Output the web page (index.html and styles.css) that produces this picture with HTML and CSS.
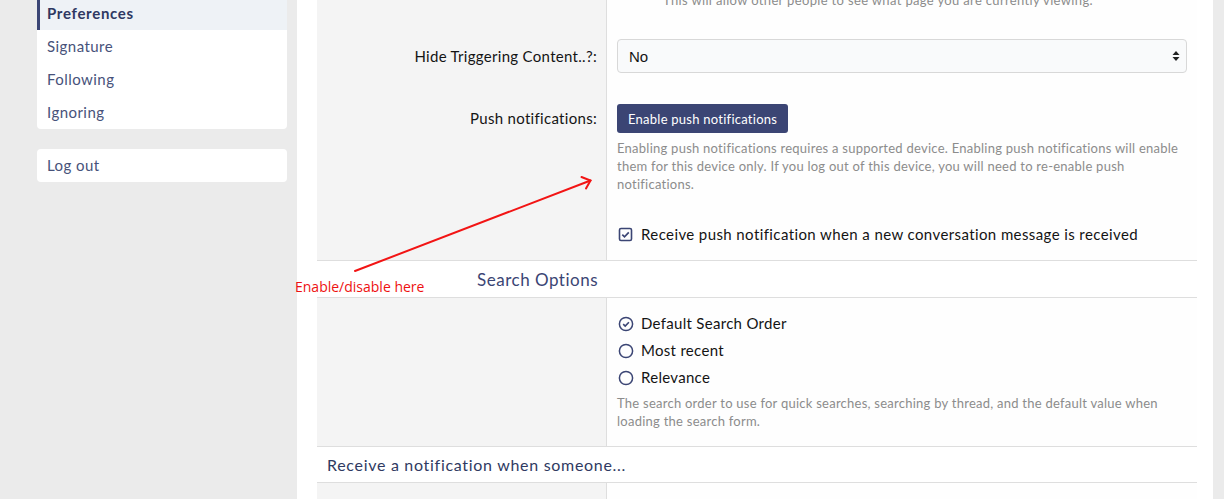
FILE: index.html
```html
<!DOCTYPE html>
<html>
<head>
<meta charset="utf-8">
<link rel="stylesheet" href="styles.css">
</head>
<body>
<div class="page">
  <aside class="sidebar">
    <nav class="block">
      <a class="nav-item active">Preferences</a>
      <a class="nav-item">Signature</a>
      <a class="nav-item">Following</a>
      <a class="nav-item">Ignoring</a>
    </nav>
    <nav class="block">
      <a class="nav-item">Log out</a>
    </nav>
  </aside>

  <main class="main">
    <div class="row row-a">
      <div class="label-cell"></div>
      <div class="input-cell">
        <p class="hint indented">This will allow other people to see what page you are currently viewing.</p>
      </div>
    </div>

    <div class="row row-b">
      <div class="label-cell"><span class="label select-label">Hide Triggering Content..?:</span></div>
      <div class="input-cell">
        <div class="select">
          <span>No</span>
          <svg class="select-arrow" width="8" height="12" viewBox="0 0 8 12"><path d="M4 1 L7.5 5 H0.5 Z M4 11 L7.5 7 H0.5 Z" fill="#222"/></svg>
        </div>
      </div>
    </div>

    <div class="row row-c">
      <div class="label-cell"><span class="label btn-label">Push notifications:</span></div>
      <div class="input-cell">
        <button class="button">Enable push notifications</button>
        <p class="hint push-hint">Enabling push notifications requires a supported device. Enabling push notifications will enable them for this device only. If you log out of this device, you will need to re-enable push notifications.</p>
      </div>
    </div>

    <div class="row row-d">
      <div class="label-cell"></div>
      <div class="input-cell">
        <label class="choice">
          <svg class="icon" width="15" height="15" viewBox="0 0 15 15"><rect x="1.5" y="1.5" width="12" height="12" rx="1.5" fill="none" stroke="#3b4574" stroke-width="1.6"/><path d="M4.3 7.6 L6.5 9.8 L10.8 5.3" fill="none" stroke="#3b4574" stroke-width="1.7"/></svg>
          <span>Receive push notification when a new conversation message is received</span>
        </label>
      </div>
    </div>

    <div class="header-row header-right">
      <div class="header-label">Search Options</div>
    </div>

    <div class="row row-e">
      <div class="label-cell"></div>
      <div class="input-cell">
        <label class="choice radio">
          <svg class="icon" width="16" height="16" viewBox="0 0 16 16"><circle cx="8" cy="8" r="6.6" fill="none" stroke="#3b4574" stroke-width="1.5"/><path d="M5.2 8.2 L7.2 10.1 L10.9 6.2" fill="none" stroke="#3b4574" stroke-width="1.6"/></svg>
          <span>Default Search Order</span>
        </label>
        <label class="choice radio">
          <svg class="icon" width="16" height="16" viewBox="0 0 16 16"><circle cx="8" cy="8" r="6.6" fill="none" stroke="#3b4574" stroke-width="1.5"/></svg>
          <span>Most recent</span>
        </label>
        <label class="choice radio">
          <svg class="icon" width="16" height="16" viewBox="0 0 16 16"><circle cx="8" cy="8" r="6.6" fill="none" stroke="#3b4574" stroke-width="1.5"/></svg>
          <span>Relevance</span>
        </label>
        <p class="hint search-hint">The search order to use for quick searches, searching by thread, and the default value when loading the search form.</p>
      </div>
    </div>

    <div class="header-row header-left">
      <div class="header-title">Receive a notification when someone...</div>
    </div>

    <div class="row row-f">
      <div class="label-cell"></div>
      <div class="input-cell"></div>
    </div>
  </main>
</div>

<div class="annotation">
  <svg class="annot-arrow" width="1224" height="499" viewBox="0 0 1224 499">
    <g stroke="#f21414" stroke-width="2" fill="none" stroke-linecap="round">
      <line x1="355" y1="271" x2="590.5" y2="180.5"/>
      <polyline points="581.5,177 590.5,180.5 586,188.5"/>
    </g>
  </svg>
  <span class="annot-text">Enable/disable here</span>
</div>
</body>
</html>
```

FILE: styles.css
```css
* { box-sizing: border-box; }

html, body {
  margin: 0;
  padding: 0;
  height: 499px;
  overflow: hidden;
}

body {
  background: #ebebeb;
  font-family: "Lato", "Open Sans", sans-serif;
  color: #141414;
  position: relative;
}

.page {
  display: flex;
  gap: 10px;
  padding-left: 37px;
  padding-right: 11px;
  height: 499px;
}

.sidebar {
  width: 250px;
  flex: none;
  display: flex;
  flex-direction: column;
  gap: 20px;
  margin-top: -3px;
}

.block {
  background: #fff;
  border-radius: 4px;
  padding: 0;
  display: flex;
  flex-direction: column;
}

.nav-item {
  display: block;
  height: 33px;
  line-height: 33px;
  padding-left: 10px;
  font-size: 15px;
  letter-spacing: 0.45px;
  color: #47527a;
  text-decoration: none;
}

.nav-item.active {
  background: #eef2f6;
  border-left: 3px solid #3b4574;
  padding-left: 7px;
  font-weight: 700;
  letter-spacing: 0.7px;
  color: #2f3862;
}

.main {
  flex: 1;
  background: #fff;
  padding: 0 16px 0 20px;
}

.row {
  display: grid;
  grid-template-columns: 290px 1fr;
}

.label-cell {
  background: #f4f4f4;
  border-right: 1px solid #dedede;
  text-align: right;
  padding-right: 9px;
}

.input-cell {
  background: #fefefe;
  padding-left: 10px;
  padding-right: 10px;
}

.label {
  display: block;
  font-size: 15px;
  letter-spacing: 0.3px;
  color: #141414;
}

.hint {
  margin: 0;
  font-size: 13px;
  line-height: 18px;
  letter-spacing: 0.25px;
  color: #8c8c8c;
}

.indented { padding-left: 46px; letter-spacing: 0.35px; }

.row-a { margin-top: -9px; }
.row-a .input-cell { padding-bottom: 20px; }

.row-b .label-cell, .row-b .input-cell { padding-top: 10px; padding-bottom: 10px; }
.select-label { line-height: 34px; }

.select {
  height: 34px;
  border: 1px solid #d8d8d8;
  border-radius: 4px;
  background: #f9fafb;
  display: flex;
  align-items: center;
  justify-content: space-between;
  padding: 0 6px 0 11px;
  font-family: "Liberation Sans", Arial, sans-serif;
  font-size: 15px;
  color: #141414;
}

.row-c .label-cell, .row-c .input-cell { padding-top: 21px; padding-bottom: 10px; }
.btn-label { line-height: 29px; }

.button {
  display: block;
  height: 29px;
  padding: 0 11px;
  border: none;
  border-radius: 3px;
  background: #3b4574;
  color: #fff;
  font-family: inherit;
  font-size: 13px;
  letter-spacing: 0.25px;
}

.push-hint { margin-top: 6px; }

.row-d .input-cell { padding-top: 21px; padding-bottom: 16px; }

.choice {
  display: flex;
  align-items: center;
  gap: 8px;
  font-size: 15px;
  line-height: 20px;
  letter-spacing: 0.4px;
  color: #141414;
}

.choice .icon { flex: none; margin-left: 1px; }

.radio { line-height: 27px; gap: 7px; letter-spacing: 0.3px; }

.header-row {
  border-top: 1px solid #dedede;
  border-bottom: 1px solid #dedede;
  height: 38px;
  display: flex;
  align-items: center;
  background: #fff;
}

.header-label {
  width: 290px;
  text-align: right;
  padding-right: 9px;
  font-size: 17px;
  letter-spacing: 0.5px;
  color: #3b4574;
}

.header-title {
  padding-left: 10px;
  font-size: 16px;
  letter-spacing: 0.7px;
  color: #2f3a62;
}

.header-left { border-top: none; height: 36px; border-bottom: 1px solid #dedede; }

.row-e .input-cell { padding-top: 12px; padding-bottom: 16px; border-bottom: 1px solid #dedede; }
.row-e .label-cell { border-bottom: 1px solid #dedede; }
.search-hint { margin-top: 3px; }

.row-f { height: 40px; }

.annotation {
  position: absolute;
  left: 0;
  top: 0;
  width: 1224px;
  height: 499px;
  pointer-events: none;
}

.annot-arrow { position: absolute; left: 0; top: 0; }

.annot-text {
  position: absolute;
  left: 295px;
  top: 277px;
  font-family: "Open Sans", sans-serif;
  font-size: 14px;
  color: #ee1111;
}
```
